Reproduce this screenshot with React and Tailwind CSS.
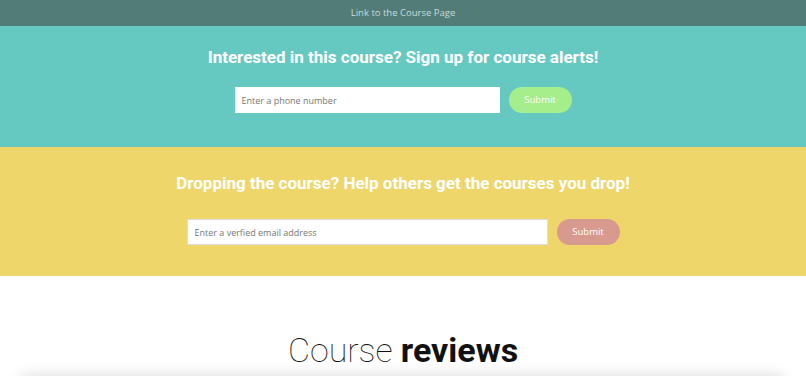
export default function App() {
  return (
    <div className="w-full bg-white" style={{ fontFamily: "'Open Sans', sans-serif" }}>
      <div className="flex h-[26px] items-center justify-center bg-[#517c78]">
        <a className="text-[9.5px] text-[#c9dcd9]">Link to the Course Page</a>
      </div>

      <section className="flex h-[121px] flex-col items-center bg-[#66c9c1] pt-[19px]">
        <h2 className="font-['Roboto',sans-serif] text-[17px] font-bold leading-[24px] text-white">
          Interested in this course? Sign up for course alerts!
        </h2>
        <div className="mt-[18px] flex items-center gap-[9px]">
          <input
            className="h-[26px] w-[265px] bg-white px-[7px] text-[9px] text-[#555] outline-none placeholder:text-[#777]"
            placeholder="Enter a phone number"
          />
          <button className="h-[26px] w-[63px] rounded-full bg-[#a5ee8b] text-[9.5px] text-white">Submit</button>
        </div>
      </section>

      <section className="flex h-[129px] flex-col items-center bg-[#eed66b] pt-[24px]">
        <h2 className="font-['Roboto',sans-serif] text-[17px] font-bold leading-[24px] text-white">
          Dropping the course? Help others get the courses you drop!
        </h2>
        <div className="mt-[24px] flex items-center gap-[9px]">
          <input
            className="h-[26px] w-[361px] border border-[#ddd] bg-white px-[7px] text-[9px] text-[#555] outline-none placeholder:text-[#777]"
            placeholder="Enter a verfied email address"
          />
          <button className="h-[26px] w-[63px] rounded-full bg-[#d8998f] text-[9.5px] text-white">Submit</button>
        </div>
      </section>

      <section className="flex flex-col items-center pt-[54px]">
        <h2 className="font-['Roboto',sans-serif] text-[34px] leading-[40px] text-[#111]">
          <span className="font-thin">Course </span>
          <span className="font-bold">reviews</span>
        </h2>
        <div className="mt-[8px] h-[60px] w-[calc(100%-40px)] rounded-lg bg-white shadow-[0_-4px_14px_rgba(0,0,0,0.12)]" />
      </section>
    </div>
  );
}
